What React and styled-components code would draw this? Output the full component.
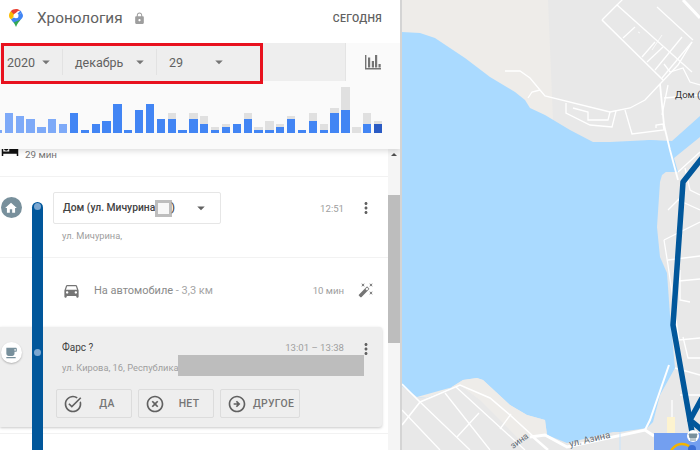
import React from "react";
import styled, { createGlobalStyle } from "styled-components";
import {
  MdArrowDropDown,
  MdAutoFixHigh,
  MdDirectionsCar,
  MdHighlightOff,
  MdHome,
  MdHotel,
  MdLocalCafe,
  MdLock,
  MdMoreVert,
  MdOutlineArrowCircleRight,
  MdTaskAlt,
} from "react-icons/md";

const GlobalStyle = createGlobalStyle`
  html, body {
    margin: 0;
    padding: 0;
    background: #fff;
    font-family: Roboto, "Liberation Sans", sans-serif;
  }
`;

const Page = styled.div`
  display: flex;
  width: 700px;
  height: 450px;
  overflow: hidden;
`;

const Panel = styled.div`
  position: relative;
  display: flex;
  flex-direction: column;
  width: 402px;
  box-sizing: border-box;
  flex-shrink: 0;
  background: #fff;
  border-right: 2px solid #d4d4d4;
`;

const Header = styled.div`
  display: flex;
  align-items: center;
  height: 43px;
  padding: 0 18px 7px 9px;
  box-sizing: border-box;
  flex-shrink: 0;
  color: #616161;
`;

const Title = styled.div`
  margin-left: 14px;
  font-size: 15.3px;
`;

const LockIcon = styled(MdLock)`
  margin-left: 10px;
  color: #9e9e9e;
  font-size: 13px;
`;

const Today = styled.div`
  margin-left: auto;
  font-size: 10.5px;
  font-weight: 500;
  letter-spacing: 0.3px;
`;

const Toolbar = styled.div`
  display: flex;
  height: 38px;
  flex-shrink: 0;
  background: #eee;
`;

const Select = styled.div`
  display: flex;
  align-items: center;
  justify-content: space-between;
  width: ${(props) => props.$width}px;
  padding: 0 ${(props) => props.$right}px 0 ${(props) => props.$left}px;
  box-sizing: border-box;
  height: 26px;
  margin-top: 6px;
  border-right: ${(props) => (props.$last ? "none" : "1px solid #e2e2e2")};
  color: #616161;
  font-size: 12.5px;
  svg {
    color: #757575;
    font-size: 18px;
  }
`;

const ChartTab = styled.div`
  display: flex;
  align-items: center;
  justify-content: center;
  width: 55px;
  margin-left: auto;
  background: #fafafa;
  border-left: 1px solid #e4e4e4;
  box-sizing: border-box;
`;

const RedFrame = styled.div`
  position: absolute;
  z-index: 3;
  top: 43px;
  left: 1px;
  width: 262px;
  height: 41px;
  box-sizing: border-box;
  border: 3px solid #e8111e;
`;

const Chart = styled.div`
  position: relative;
  z-index: 2;
  display: flex;
  align-items: flex-end;
  height: 68px;
  padding-bottom: 16px;
  box-sizing: border-box;
  flex-shrink: 0;
  overflow: hidden;
  background: #fafafa;
  box-shadow: 0 2px 6px rgba(0, 0, 0, 0.14);
  clip-path: inset(0 0 -8px 0);
`;

const ChartInner = styled.div`
  display: flex;
  align-items: flex-end;
  gap: 2.54px;
  margin-left: -6.2px;
`;

const Bar = styled.div`
  display: flex;
  flex-direction: column;
  justify-content: flex-end;
  width: 8.33px;
  flex-shrink: 0;
  background: #e0e0e0;
`;

const BarFill = styled.div`
  background: ${(props) => props.$color};
`;

const Content = styled.div`
  display: flex;
  flex: 1;
  min-height: 0;
`;

const Feed = styled.div`
  position: relative;
  flex: 1;
  min-width: 0;
  overflow: hidden;
`;

const Track = styled.div`
  position: absolute;
  top: 53px;
  left: 32px;
  width: 11px;
  height: 260px;
  border-radius: 6px 6px 0 0;
  background: #01579b;
`;

const Stop = styled.div`
  position: absolute;
  top: ${(props) => props.$top}px;
  left: 33.5px;
  width: 7px;
  height: 7px;
  border-radius: 50%;
  background: #7ba7d1;
`;

const SleepRow = styled.div`
  display: flex;
  align-items: flex-start;
  height: 27px;
  padding-left: 1px;
  border-bottom: 1px solid #f2f2f2;
  color: #757575;
  font-size: 9.8px;
  line-height: 11px;
`;

const BedIcon = styled(MdHotel)`
  flex-shrink: 0;
  margin: -8px 6px 0 0;
  font-size: 18px;
  color: #111;
`;

const HomeRow = styled.div`
  display: flex;
  flex-direction: column;
  height: 81px;
  padding: 15px 0 0 53px;
  box-sizing: border-box;
  border-bottom: 1px solid #f2f2f2;
`;

const PlaceLine = styled.div`
  display: flex;
  align-items: center;
`;

const Dropdown = styled.div`
  display: flex;
  align-items: center;
  justify-content: space-between;
  width: 168px;
  height: 32px;
  padding: 0 10px 0 9px;
  box-sizing: border-box;
  border: 1px solid #e6e6e6;
  border-radius: 2px;
  color: #424242;
  font-size: 10.3px;
  font-weight: 500;
  svg {
    color: #616161;
    font-size: 18px;
  }
`;

const Redaction = styled.span`
  display: inline-block;
  vertical-align: middle;
  width: 17px;
  height: 17px;
  margin-right: -1px;
  box-sizing: border-box;
  border: 3px solid #bdbdbd;
  background: #f7f7f7;
`;

const Time = styled.div`
  margin-left: auto;
  color: #9e9e9e;
  font-size: 9.6px;
`;

const More = styled(MdMoreVert)`
  flex-shrink: 0;
  margin: 0 ${(props) => props.$right}px 0 13px;
  color: #616161;
  font-size: 18px;
`;

const Address = styled.div`
  margin: 6px 0 0 9px;
  color: #9e9e9e;
  font-size: 9.3px;
`;

const DriveRow = styled.div`
  display: flex;
  align-items: center;
  height: 69px;
  padding: 0 14px 5px 62px;
  box-sizing: border-box;
  font-size: 11px;
  color: #757575;
  svg {
    flex-shrink: 0;
    font-size: 19px;
  }
`;

const DriveLabel = styled.div`
  margin-left: 13px;
  color: #8a8a8a;
  span {
    color: #a5a5a5;
  }
`;

const Wand = styled(MdAutoFixHigh)`
  margin-left: 14px;
  && {
    font-size: 16px;
  }
`;

const Card = styled.div`
  position: relative;
  display: flex;
  flex-direction: column;
  width: 382px;
  height: 100px;
  padding: 13px 0 0 62px;
  box-sizing: border-box;
  background: #eee;
  border-radius: 0 3px 3px 0;
  box-shadow: 0 1px 3px rgba(0, 0, 0, 0.22);
`;

const CardTop = styled.div`
  display: flex;
  align-items: flex-start;
  height: 16px;
`;

const CardName = styled.div`
  color: #424242;
  font-size: 10px;
  line-height: 16px;
`;

const CardTime = styled.div`
  margin-left: auto;
  color: #9e9e9e;
  font-size: 9.6px;
  line-height: 16px;
`;

const CardAddress = styled.div`
  margin-top: 5px;
  color: #9e9e9e;
  font-size: 9.3px;
  line-height: 14px;
`;

const Blackout = styled.span`
  position: absolute;
  top: 28px;
  left: 178px;
  width: 186px;
  height: 21px;
  background: #bdbdbd;
`;

const Actions = styled.div`
  display: flex;
  gap: 6px;
  margin: 14px 0 0 -6px;
`;

const Action = styled.div`
  display: flex;
  align-items: center;
  width: ${(props) => props.$width}px;
  height: 29px;
  padding: 0 6px;
  box-sizing: border-box;
  border: 1px solid #dcdcdc;
  border-radius: 2px;
  color: #757575;
  font-size: 10.4px;
  font-weight: 500;
  letter-spacing: 0.3px;
  svg {
    flex-shrink: 0;
    color: #616161;
    font-size: 20px;
  }
  span {
    flex: 1;
    padding-left: 6px;
    text-align: center;
  }
`;

const Divider = styled.div`
  margin-top: 6px;
  border-top: 1px solid #f2f2f2;
`;

const Badge = styled.div`
  position: absolute;
  top: ${(props) => props.$top}px;
  left: 0.5px;
  display: flex;
  align-items: center;
  justify-content: center;
  width: 21px;
  height: 21px;
  border-radius: 50%;
  background: ${(props) => (props.$light ? "#fff" : "#78909c")};
  color: ${(props) => (props.$light ? "#78909c" : "#fff")};
  box-shadow: ${(props) =>
    props.$light ? "0 1px 2px rgba(0,0,0,.25)" : "none"};
  font-size: 14px;
`;

const Scrollbar = styled.div`
  width: 12px;
  flex-shrink: 0;
  background: #f5f5f5;
`;

const ScrollArrow = styled.div`
  margin: 4px auto 0;
  width: 0;
  height: 0;
  border-left: 3px solid transparent;
  border-right: 3px solid transparent;
  border-bottom: 3px solid #505050;
`;

const ScrollThumb = styled.div`
  margin-top: 39px;
  height: 148px;
  background: #bdbdbd;
`;

const MapArea = styled.div`
  flex: 1;
  min-width: 0;
  background: #e8e8e8;
  svg {
    display: block;
  }
`;

// [blue height, total height], taken from the day chart
const bars = [
  [3, 3], [20, 20], [17, 17], [14, 14], [6, 6], [14, 14], [9, 9], [20, 20],
  [3, 3], [9, 9], [12, 12], [29, 29], [3, 3], [23, 23], [29, 29], [14, 14],
  [14, 20], [3, 3], [14, 20], [9, 17], [3, 6], [6, 9], [9, 9], [14, 20],
  [3, 6], [3, 12], [6, 9], [14, 17], [3, 3], [12, 20], [3, 9], [20, 25],
  [23, 46], [0, 6], [9, 20], [9, 12],
];

function barColor(i) {
  if (i === 35) return "#2a5bc4";
  if (i < 7) return "#7eaaf8";
  return "#4285f4";
}

function MapsLogo() {
  return (
    <svg width="14" height="18" viewBox="0 0 14 18">
      <path d="M7 18C5.8 14.6 4 13 2.2 10.6L7 7z" fill="#34a853" />
      <path d="M7 18C8.2 14.6 10 13 11.8 10.6L7 7z" fill="#34a853" />
      <path d="M1.8 2.2C.7 3.4 0 4.9 0 6.8 0 8.4.9 9.7 2.2 10.6L7 5z" fill="#fbbc04" />
      <path d="M7 0C4.9 0 3 .9 1.8 2.2L5 5.5 9 2 11.5 1.6C10.2.6 8.7 0 7 0z" fill="#ea4335" />
      <path d="M11.5 1.6 4.8 8.5C5.4 9.2 6.2 9.5 7 9.5 8.5 9.5 9.5 8.4 9.5 7 9.5 6.5 9.4 6.1 9.2 5.7L12.8 3.8C12.4 3 12 2.2 11.5 1.6z" fill="#4285f4" />
      <path d="M12.8 3.8 9.2 5.7 2.2 10.6C3 11.8 3.8 12.5 4.5 13.4L11.8 10.6C13 9.5 14 8.4 14 6.8 14 5.7 13.5 4.7 12.8 3.8z" fill="#4285f4" />
      <circle cx="7" cy="6.8" r="2.5" fill="#fff" />
    </svg>
  );
}

function StatsIcon() {
  return (
    <svg width="16" height="16" viewBox="0 0 16 16" fill="#757575">
      <path d="M.7 1v13.8H16" fill="none" stroke="#757575" strokeWidth="1.4" />
      <rect x="3" y="3.5" width="2.2" height="10" />
      <rect x="6.8" y="7" width="2.2" height="6.5" />
      <rect x="10" y="1" width="2.2" height="12.5" />
      <rect x="13.5" y="10" width="2.2" height="3.5" />
    </svg>
  );
}

function LakeMap() {
  return (
    <svg width="298" height="450" viewBox="402 0 298 450">
      <rect x="402" y="0" width="298" height="450" fill="#e8e8e8" />
      <path d="M402 0H548L553 120 H402z" fill="#eeece9" />
      <path d="M590 142 610 142 650 140 672 141 700 116V137L674 158 678 172H660L600 150z" fill="#aadaff" />
      <path
        d="M402 32 420 33 435 38 450 48 465 58 490 77 515 92 525 100 530 108 545 115 570 130 593 142 610 142 635 143 650 140 667 142 670 150 671 168 662 175 660 182 657 227 660 257 667 273 670 315 675 368 660 395 653 422 647 428 620 432 613 432 567 443 547 435 545 420 527 415 510 405 483 380 477 378 463 380 447 390 427 398 417 397 402 386z"
        fill="#aadaff"
      />
      <path d="M417 397 427 398 447 390 463 380 477 378 483 380 510 405 527 415 545 420 547 435 520 440 480 400 460 385z" fill="#eeece9" />
      <g fill="none" stroke="#fff" strokeWidth="1.3">
        <path d="M505 71 520 71 530 78 540 90 545 96 610 112 630 108 645 100 660 84 678 65 692 42" />
        <path d="M540 90 532 92 528 98" />
        <path d="M566 103 566 113 590 125 612 127 616 111" />
        <path d="M573 108 588 112 588 120 608 120 610 112" />
        <path d="M625 110 632 134 664 130 663 124 656 125 656 128" />
        <path d="M660 84 664 125 670 150 678 180" strokeWidth="1.8" />
        <path d="M602 20 663 80" strokeWidth="1.6" />
        <path d="M602 20 617 5 692 72" />
        <path d="M617 5 624 -2M657 7 693 40" />
        <path d="M623 38 635 27M642 57 655 42M647 62 663 47M655 70 682 37M662 78 692 42" />
        <path d="M638 32 640 33M652 50 662 35" strokeWidth="0.8" />
        <path d="M683 0 700 18" strokeWidth="3" />
        <path d="M664 64 670 72 683 68 690 82 700 85M668 85 662 115M664 98 700 95" />
        <path d="M678 172 700 152M685 168 690 190 700 195M678 200 700 210" />
        <path d="M668 210 680 198M664 240 700 222M668 260 700 256" />
      </g>
      <g fill="none" stroke="#fff" strokeWidth="1.3">
        <path d="M664 240 668 265 679 340 700 338" />
        <path d="M679 281 700 279" strokeWidth="1.6" />
        <path d="M680 270 680 300 690 302" />
        <path d="M683 337 688 358 700 358" />
        <path d="M675 368 700 375" />
        <path d="M669 365 650 420 645 430" strokeWidth="2" />
        <path d="M680 395 700 395M672 400 672 432" />
        <path d="M402 384 420 402 402 425" strokeWidth="1.6" />
        <path d="M420 402 460 385 490 398 510 415 534 437" strokeWidth="1.6" />
        <path d="M420 402 470 450M402 410 440 450M445 393 490 450M456 387 525 450" />
        <path d="M479 413 457 437M511 414 500 429" />
      </g>
      <path d="M530 437 545 435 567 447 645 430 654 436" fill="none" stroke="#fff" strokeWidth="3" />
      <path d="M532 436 548 450" fill="none" stroke="#fff" strokeWidth="2.5" />
      <path d="M620 432V450" stroke="#c8e4fb" strokeWidth="1" />
      <rect x="667" y="417" width="8" height="16" fill="#fdf3cf" />
      <text x="675" y="98" fontFamily="Roboto, sans-serif" fontSize="9.5" fill="#333">
        Дом (
      </text>
      <text
        x="570"
        y="447"
        fontFamily="Roboto, sans-serif"
        fontSize="9.5"
        fill="#5f6b76"
        transform="rotate(-13 570 447)"
      >
        ул. Азина
      </text>
      <text
        x="513"
        y="449"
        fontFamily="Roboto, sans-serif"
        fontSize="9"
        fill="#5f6b76"
        transform="rotate(-36 513 449)"
      >
        зина
      </text>
      <g fill="none" stroke="#01579b" strokeWidth="5.5" strokeLinejoin="round">
        <path d="M702 158 683 182 680 225 673 325 692 432" />
        <path d="M702 398 690 420 702 430" />
      </g>
      <rect x="654" y="433" width="46" height="17" fill="#739ff0" />
      <circle cx="682" cy="456" r="12" fill="#739ff0" stroke="#f4b400" strokeWidth="2.5" />
      <circle cx="693" cy="436" r="6" fill="#fff" />
      <path d="M689 434h8l-1 4h-6zM690 440h6" fill="#78909c" stroke="#78909c" strokeWidth="1" />
      <circle cx="692" cy="449" r="4" fill="#3c6fd6" />
    </svg>
  );
}

const App = () => {
  return (
    <Page>
      <GlobalStyle />
      <Panel>
        <Header>
          <MapsLogo />
          <Title>Хронология</Title>
          <LockIcon />
          <Today>СЕГОДНЯ</Today>
        </Header>
        <Toolbar>
          <Select $width={63} $left={7} $right={7}>
            2020
            <MdArrowDropDown />
          </Select>
          <Select $width={94} $left={12} $right={7}>
            декабрь
            <MdArrowDropDown />
          </Select>
          <Select $width={80} $left={12} $right={9} $last>
            29
            <MdArrowDropDown />
          </Select>
          <ChartTab>
            <StatsIcon />
          </ChartTab>
        </Toolbar>
        <RedFrame />
        <Chart>
          <ChartInner>
            {bars.map(([blue, total], i) => (
              <Bar key={i} style={{ height: total }}>
                <BarFill $color={barColor(i)} style={{ height: blue }} />
              </Bar>
            ))}
          </ChartInner>
        </Chart>
        <Content>
          <Feed>
            <SleepRow>
              <BedIcon />
              <span>29 мин</span>
            </SleepRow>
            <HomeRow>
              <PlaceLine>
                <Dropdown>
                  <span>
                    Дом (ул. Мичурина
                    <Redaction />)
                  </span>
                  <MdArrowDropDown />
                </Dropdown>
                <Time>12:51</Time>
                <More $right={13} />
              </PlaceLine>
              <Address>ул. Мичурина,</Address>
            </HomeRow>
            <DriveRow>
              <MdDirectionsCar />
              <DriveLabel>
                На автомобиле <span>- 3,3 км</span>
              </DriveLabel>
              <Time>10 мин</Time>
              <Wand />
            </DriveRow>
            <Card>
              <CardTop>
                <CardName>Фарс ?</CardName>
                <CardTime>13:01 – 13:38</CardTime>
                <More $right={7} />
              </CardTop>
              <CardAddress>ул. Кирова, 16, Республика</CardAddress>
              <Blackout />
              <Actions>
                <Action $width={76}>
                  <MdTaskAlt />
                  <span>ДА</span>
                </Action>
                <Action $width={76}>
                  <MdHighlightOff />
                  <span>НЕТ</span>
                </Action>
                <Action $width={80}>
                  <MdOutlineArrowCircleRight />
                  <span>ДРУГОЕ</span>
                </Action>
              </Actions>
            </Card>
            <Divider />
            <Track />
            <Stop $top={54} />
            <Stop $top={200} />
            <Badge $top={48}>
              <MdHome />
            </Badge>
            <Badge $top={193} $light>
              <MdLocalCafe />
            </Badge>
          </Feed>
          <Scrollbar>
            <ScrollArrow />
            <ScrollThumb />
          </Scrollbar>
        </Content>
      </Panel>
      <MapArea>
        <LakeMap />
      </MapArea>
    </Page>
  );
};

export default App;
